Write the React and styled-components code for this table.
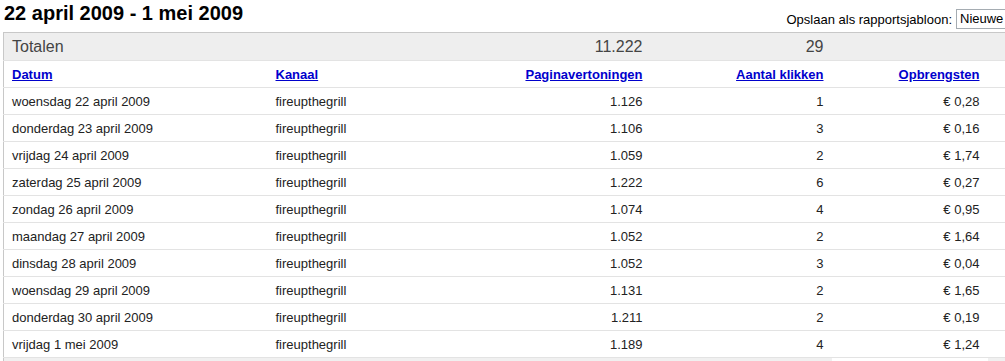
import React from "react"
import styled, { createGlobalStyle } from "styled-components"

const GlobalStyle = createGlobalStyle`
  html, body {
    margin: 0;
    padding: 0;
    background: #fff;
    overflow: hidden;
  }
  body {
    font-family: "Liberation Sans", Arial, sans-serif;
    color: #222;
  }
`

const Page = styled.div`
  width: 1060px;
  padding-left: 3px;
`

const TopBar = styled.div`
  display: flex;
  justify-content: space-between;
  align-items: flex-end;
  height: 32px;
`

const Title = styled.h1`
  margin: 0;
  padding: 1px 0 0 1px;
  align-self: flex-start;
  font-size: 20px;
  line-height: 24px;
  font-weight: bold;
  color: #000;
`

const SaveAs = styled.label`
  display: flex;
  align-items: center;
  gap: 4px;
  margin-right: 13px;
  margin-bottom: 3px;
  font-size: 13px;
  color: #000;
`

const TemplateSelect = styled.div`
  width: 86px;
  height: 18px;
  border: 1px solid #a5acb2;
  padding: 0 3px;
  font-size: 13px;
  line-height: 18px;
  white-space: nowrap;
  overflow: hidden;
  background: #fff;
`

const Table = styled.table`
  width: 1010px;
  border-collapse: collapse;
  table-layout: fixed;
  border-top: 1px solid #c8c8c8;
  border-left: 1px solid #c8c8c8;
  font-size: 13px;
`

const TotalsRow = styled.tr`
  background: #eeeeee;
  height: 28px;
  font-size: 16px;
  color: #444;
`

const Row = styled.tr`
  height: 27px;
  border-top: 1px solid #e3e3e3;
`

const Cell = styled.td`
  padding: 0 8px 0 ${p => p.$indent ?? 8}px;
  text-align: ${p => (p.$right ? "right" : "left")};
  white-space: nowrap;
  overflow: hidden;
`

const HeadCell = styled(Cell).attrs({ as: "th" })`
  font-weight: bold;
`

const SortLink = styled.a`
  color: #0000cc;
  text-decoration: underline;
  cursor: pointer;
`

const Footer = styled.tr`
  height: 6px;
  background: #f0f0f0;
  border-top: 1px solid #e3e3e3;
`

const FooterGap = styled.td`
  background: #fff;
`

const rows = [
  ["woensdag 22 april 2009", "1.126", "1", "€ 0,28"],
  ["donderdag 23 april 2009", "1.106", "3", "€ 0,16"],
  ["vrijdag 24 april 2009", "1.059", "2", "€ 1,74"],
  ["zaterdag 25 april 2009", "1.222", "6", "€ 0,27"],
  ["zondag 26 april 2009", "1.074", "4", "€ 0,95"],
  ["maandag 27 april 2009", "1.052", "2", "€ 1,64"],
  ["dinsdag 28 april 2009", "1.052", "3", "€ 0,04"],
  ["woensdag 29 april 2009", "1.131", "2", "€ 1,65"],
  ["donderdag 30 april 2009", "1.211", "2", "€ 0,19"],
  ["vrijdag 1 mei 2009", "1.189", "4", "€ 1,24"],
]

const columns = [
  { label: "Datum", width: 265 },
  { label: "Kanaal", width: 200, indent: 7 },
  { label: "Paginavertoningen", width: 182, right: true },
  { label: "Aantal klikken", width: 181, right: true },
  { label: "Opbrengsten", width: 156, right: true },
]

export default function App() {
  return (
    <Page>
      <GlobalStyle />
      <TopBar>
        <Title>22 april 2009 - 1 mei 2009</Title>
        <SaveAs>
          Opslaan als rapportsjabloon:
          <TemplateSelect>Nieuwe rapport</TemplateSelect>
        </SaveAs>
      </TopBar>
      <Table>
        <colgroup>
          {columns.map(c => (
            <col key={c.label} style={{ width: c.width }} />
          ))}
          <col />
        </colgroup>
        <tbody>
          <TotalsRow>
            <Cell>Totalen</Cell>
            <Cell />
            <Cell $right>11.222</Cell>
            <Cell $right>29</Cell>
            <Cell />
            <Cell />
          </TotalsRow>
          <Row>
            {columns.map(c => (
              <HeadCell key={c.label} $right={c.right} $indent={c.indent}>
                <SortLink>{c.label}</SortLink>
              </HeadCell>
            ))}
            <HeadCell />
          </Row>
          {rows.map(([date, views, clicks, revenue]) => (
            <Row key={date}>
              <Cell>{date}</Cell>
              <Cell $indent={7}>fireupthegrill</Cell>
              <Cell $right>{views}</Cell>
              <Cell $right>{clicks}</Cell>
              <Cell $right>{revenue}</Cell>
              <Cell />
            </Row>
          ))}
          <Footer>
            <td colSpan={4} />
            <FooterGap />
            <td />
          </Footer>
        </tbody>
      </Table>
    </Page>
  )
}
